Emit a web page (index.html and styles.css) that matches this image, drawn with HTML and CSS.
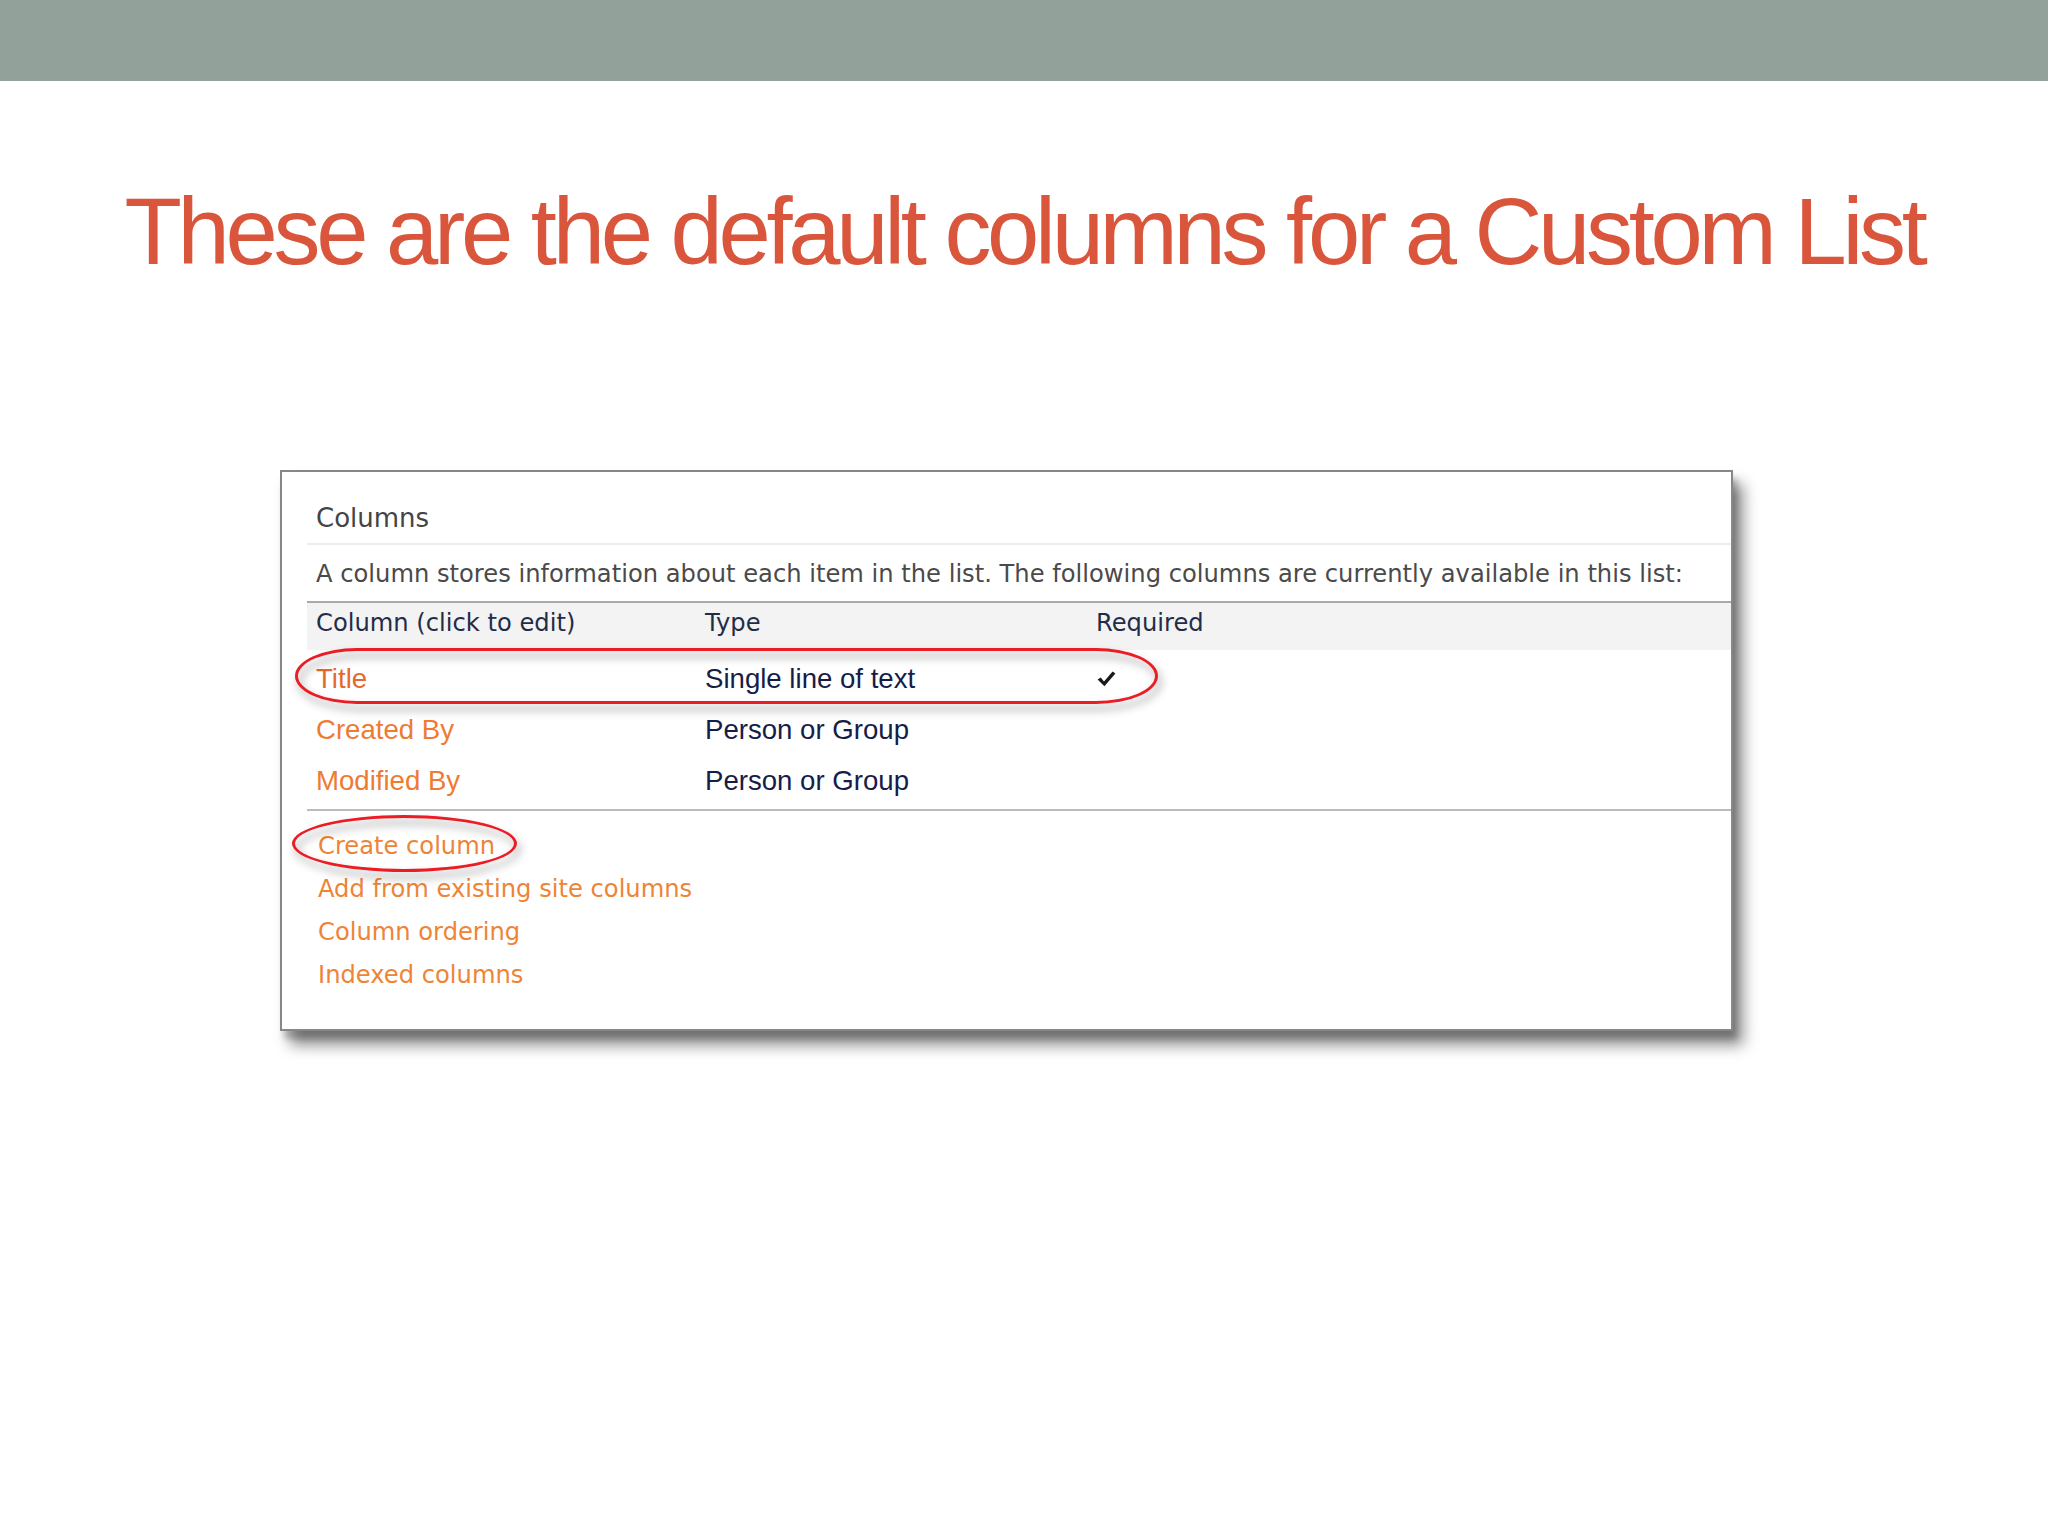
FILE: index.html
```html
<!DOCTYPE html>
<html lang="en">
<head>
<meta charset="utf-8">
<title>Default columns for a Custom List</title>
<link rel="stylesheet" href="styles.css">
</head>
<body>
<div class="topbar"></div>
<h1 class="title">These are the default columns for a Custom List</h1>
<div class="stage">
  <div class="panel">
    <div class="sec heading"><span class="pad">Columns</span></div>
    <div class="sec desc"><span class="pad">A column stores information about each item in the list. The following columns are currently available in this list:</span></div>
    <div class="sec thead">
      <div class="cell">Column (click to edit)</div>
      <div class="cell">Type</div>
      <div class="cell">Required</div>
    </div>
    <div class="sec rows">
      <div class="row">
        <div class="cell name first">Title</div>
        <div class="cell type">Single line of text</div>
        <div class="cell req">
          <svg class="check" width="19" height="16" viewBox="0 0 19 16"><path d="M0.6 8.6 L3.8 6.4 L7 10.4 L15.6 0.6 L18.4 2.4 L7.4 15.2 Z" fill="#1a1a1a"/></svg>
        </div>
      </div>
      <div class="row">
        <div class="cell name">Created By</div>
        <div class="cell type">Person or Group</div>
        <div class="cell req"></div>
      </div>
      <div class="row">
        <div class="cell name">Modified By</div>
        <div class="cell type">Person or Group</div>
        <div class="cell req"></div>
      </div>
    </div>
    <div class="links">
      <div class="link">Create column</div>
      <div class="link">Add from existing site columns</div>
      <div class="link">Column ordering</div>
      <div class="link">Indexed columns</div>
    </div>
    <div class="ring ring-title"></div>
    <div class="ring ring-create"></div>
  </div>
</div>
</body>
</html>
```

FILE: styles.css
```css
html, body {
  margin: 0;
  padding: 0;
  background: #ffffff;
  font-family: "Liberation Sans", Arial, sans-serif;
}

.topbar {
  height: 81px;
  background: #92a29a;
}

.title {
  margin: 0;
  padding-top: 104px;
  height: 94px;
  font-family: "Liberation Sans", Arial, sans-serif;
  font-weight: normal;
  font-size: 94px;
  line-height: 94px;
  letter-spacing: -4.3px;
  color: #d9553b;
  text-align: center;
  white-space: nowrap;
}

.stage {
  padding-left: 280px;
  padding-top: 191px;
  padding-bottom: 120px;
}

.panel {
  position: relative;
  box-sizing: border-box;
  width: 1453px;
  border: 2px solid #878787;
  background: #ffffff;
  box-shadow: 10px 14px 14px rgba(0, 0, 0, 0.45), 4px 8px 6px rgba(0, 0, 0, 0.2);
}

.sec {
  margin-left: 25px;
}

.pad {
  display: block;
  padding-left: 9px;
}

.heading {
  padding-top: 30px;
  padding-bottom: 9px;
  border-bottom: 2px solid #ededed;
  font-family: "DejaVu Sans", Verdana, sans-serif;
  font-size: 26px;
  line-height: 32px;
  color: #444444;
}

.desc {
  padding-top: 15px;
  padding-bottom: 13px;
  font-family: "DejaVu Sans", Verdana, sans-serif;
  font-size: 24.2px;
  line-height: 28px;
  color: #4a4a4a;
  white-space: nowrap;
}

.thead {
  display: grid;
  grid-template-columns: 389px 391px 1fr;
  height: 47px;
  box-sizing: content-box;
  border-top: 2px solid #a9a9a9;
  background: #f3f3f3;
  font-family: "DejaVu Sans", Verdana, sans-serif;
  font-size: 24.2px;
  line-height: 41px;
  color: #1f2d4a;
}

.cell {
  padding-left: 9px;
  white-space: nowrap;
}

.rows {
  padding-top: 3px;
  padding-bottom: 3px;
  border-bottom: 2px solid #bcbcbc;
}

.row {
  display: grid;
  grid-template-columns: 389px 391px 1fr;
  height: 51px;
  font-family: "Liberation Sans", Arial, sans-serif;
  font-size: 27.6px;
  line-height: 51px;
}

.name {
  color: #ee7b32;
}

.name.first {
  color: #e5692e;
}

.type {
  color: #161d48;
}

.req {
  display: flex;
  align-items: center;
  padding-left: 10px;
}

.links {
  padding: 14px 0 32px 36px;
  font-family: "DejaVu Sans", Verdana, sans-serif;
  font-size: 24.2px;
  line-height: 43px;
  color: #ee8436;
}

.ring {
  position: absolute;
  box-sizing: border-box;
  border: 3.5px solid #ec1c24;
  filter: drop-shadow(3px 6px 4px rgba(0, 0, 0, 0.42));
}

.ring-title {
  left: 13px;
  top: 176px;
  width: 863px;
  height: 56px;
  border-radius: 62px / 28px;
}

.ring-create {
  left: 10px;
  top: 343px;
  width: 225px;
  height: 57px;
  border-radius: 50%;
}
```
